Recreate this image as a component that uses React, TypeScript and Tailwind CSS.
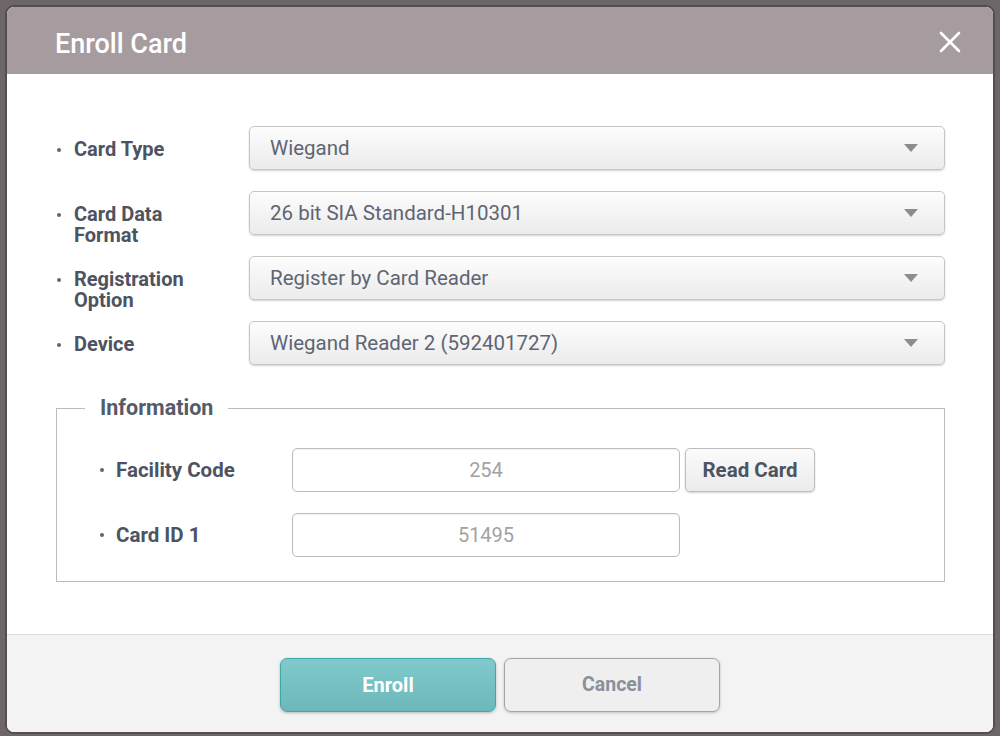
import React from "react";

const font = { fontFamily: "Roboto, 'Liberation Sans', sans-serif" };

function Arrow() {
  return (
    <svg width="14" height="8" viewBox="0 0 14 8" className="shrink-0">
      <polygon points="0,0 14,0 7,8" fill="#8c8c8c" />
    </svg>
  );
}

function Bullet() {
  return <span className="inline-block w-[4px] h-[4px] rounded-full bg-[#666666]" />;
}

function Select({ value }: { value: string }) {
  return (
    <div className="flex-1 h-[44px] flex items-center justify-between pl-[20px] pr-[26px] rounded-[5px] border border-[#c6c6c6] bg-gradient-to-b from-[#fdfdfd] to-[#ebebeb] shadow-[0_1px_2px_rgba(0,0,0,0.18)]">
      <span className="text-[20.5px] text-[#5e6573]">{value}</span>
      <Arrow />
    </div>
  );
}

function Row({ label, value }: { label: React.ReactNode; value: string }) {
  return (
    <div className="flex items-start h-[44px]">
      <div className="w-[193px] flex items-start shrink-0 pt-[13px] pl-[1px]">
        <span className="w-[17px] h-[21px] flex items-center"><Bullet /></span>
        <span className="w-[125px] text-[20px] font-bold leading-[21px] text-[#4d5361]">{label}</span>
      </div>
      <Select value={value} />
    </div>
  );
}

function InfoRow({ label, value, button }: { label: string; value: string; button?: boolean }) {
  return (
    <div className="flex items-center h-[44px]">
      <div className="w-[192px] flex items-center shrink-0">
        <span className="w-[16px] flex items-center"><Bullet /></span>
        <span className="text-[20.5px] font-bold text-[#4d5361]">{label}</span>
      </div>
      <div className="w-[388px] h-[44px] flex items-center justify-center rounded-[5px] border border-[#bdbdbd] bg-white shadow-[inset_0_1px_2px_rgba(0,0,0,0.06)]">
        <span className="text-[20px] text-[#a2a2a2]">{value}</span>
      </div>
      {button && (
        <div className="ml-[5px] w-[130px] h-[44px] flex items-center justify-center rounded-[5px] border border-[#bdbdbd] bg-gradient-to-b from-[#fbfbfb] to-[#ebebeb] shadow-[0_1px_2px_rgba(0,0,0,0.18)]">
          <span className="text-[20.5px] font-bold text-[#4d5361]">Read Card</span>
        </div>
      )}
    </div>
  );
}

export default function App() {
  return (
    <div style={font} className="w-[1000px] h-[736px] bg-[#6d6668] pt-[5px] px-[5px] overflow-hidden">
      <div className="w-[990px] h-[729px] border-2 border-[#574c52] rounded-[9px] overflow-hidden flex flex-col bg-white">
        <div className="h-[67px] bg-[#a69c9f] flex items-center justify-between pl-[48px] pr-[32px] pt-[8px] shrink-0">
          <span className="text-[27px] font-medium text-white">Enroll Card</span>
          <svg width="22" height="22" viewBox="0 0 22 22" className="mb-[6px]">
            <path d="M2 2 L20 20 M20 2 L2 20" stroke="#ffffff" strokeWidth="2.6" strokeLinecap="round" />
          </svg>
        </div>
        <div className="flex-1 pt-[52px] pl-[49px] pr-[48px]">
          <div className="flex flex-col gap-[21px]">
            <Row label="Card Type" value="Wiegand" />
            <Row label="Card Data Format" value="26 bit SIA Standard-H10301" />
            <Row label="Registration Option" value="Register by Card Reader" />
            <Row label="Device" value="Wiegand Reader 2 (592401727)" />
          </div>
          <fieldset className="mt-[30px] border border-[#bcbcbc] pb-[24px]">
            <legend className="ml-[28px] px-[15px] text-[21.5px] font-bold leading-[26px] text-[#555b68]">Information</legend>
            <div className="flex flex-col gap-[21px] pl-[43px] pt-[27px]">
              <InfoRow label="Facility Code" value="254" button />
              <InfoRow label="Card ID 1" value="51495" />
            </div>
          </fieldset>
        </div>
        <div className="h-[98px] shrink-0 border-t border-[#dddddd] bg-[#f3f3f3] flex justify-center gap-[8px] pt-[23px]">
          <div className="w-[216px] h-[54px] flex items-center justify-center rounded-[7px] border border-[#3ea8a7] bg-gradient-to-b from-[#80c9cc] to-[#6db8bb] shadow-[0_1px_3px_rgba(0,0,0,0.25)]">
            <span className="text-[20px] font-bold text-white">Enroll</span>
          </div>
          <div className="w-[216px] h-[54px] flex items-center justify-center rounded-[7px] border border-[#a5a5a5] bg-[#efefef] shadow-[0_1px_3px_rgba(0,0,0,0.2)]">
            <span className="text-[19.5px] font-bold text-[#8a909b]">Cancel</span>
          </div>
        </div>
      </div>
    </div>
  );
}
